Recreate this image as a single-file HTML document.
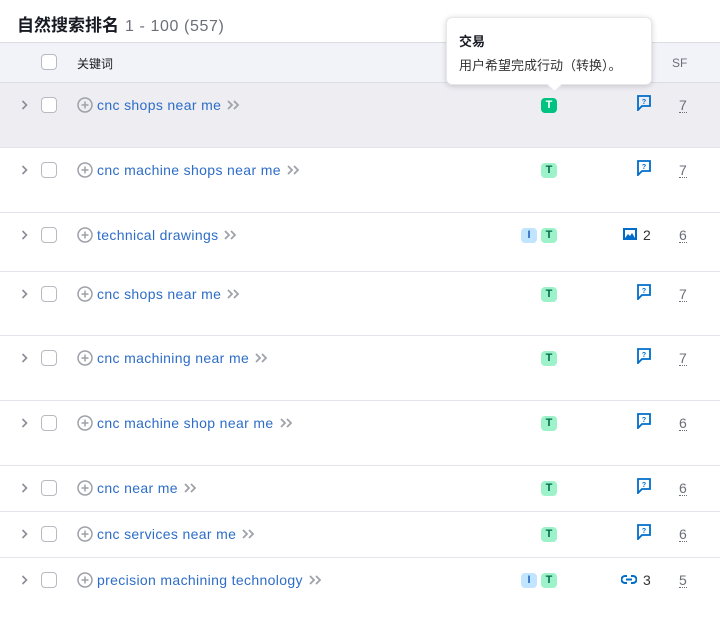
<!DOCTYPE html>
<html><head><meta charset="utf-8"><style>
*{margin:0;padding:0;box-sizing:border-box}
body{width:720px;height:617px;overflow:hidden;background:#fff;font-family:"Liberation Sans","Noto Sans CJK SC",sans-serif;position:relative;color:#333}
.title{position:absolute;left:17px;top:11px;font-size:17px;font-weight:bold;color:#171a22}
.title span{font-weight:normal;color:#6c6e79;font-size:16px;margin-left:6px;letter-spacing:0.6px}
.hdr{position:absolute;left:0;top:42px;width:720px;height:41px;background:#f2f3f8;border-top:1px solid #dcdde3;border-bottom:1px solid #dcdde3}
.row{position:absolute;left:0;width:720px;border-bottom:1px solid #e3e4e9}
.cb{position:absolute;left:41px;width:16px;height:16px;border:1px solid #b8bac2;border-radius:4px;background:#fff}
.chev{position:absolute;left:21px}
.kw{position:absolute;left:77px;font-size:14px;letter-spacing:0.35px;color:#2d6dc7;white-space:nowrap;display:flex;align-items:center}
.kw svg{margin-right:4px}
.kw svg.ar{margin-left:5px;margin-right:0}
.tag{position:absolute;width:16px;height:15px;border-radius:4px;font-size:11px;font-weight:bold;text-align:center;line-height:15px}
.T{background:#9ef2c9;color:#006a49}
.I{background:#c2e5ff;color:#1f63c1}
.sf{position:absolute;left:679px;font-size:14px;color:#6c6e79;border-bottom:1px dotted #6c6e79;line-height:14px}
.ic{position:absolute}
.num{position:absolute;font-size:14px;color:#333}
.tip{position:absolute;left:446px;top:17px;width:206px;height:68px;background:#fff;border-radius:6px;box-shadow:0 1px 6px rgba(0,0,0,.18);border:1px solid #e6e7ea}
.tip b{position:absolute;left:12px;top:13px;font-size:13px;color:#171a22}
.tip p{position:absolute;left:12px;top:37px;font-size:13px;color:#333;white-space:nowrap}
.tip:after{content:"";position:absolute;left:102px;bottom:-6px;width:10px;height:10px;background:#fff;transform:rotate(45deg);border-right:1px solid #e6e7ea;border-bottom:1px solid #e6e7ea}
</style></head><body>
<div class="title">自然搜索排名<span>1 - 100 (557)</span></div>
<div class="hdr">
<div class="cb" style="top:11px"></div>
<div style="position:absolute;left:77px;top:12px;font-size:12px;color:#171a22">关键词</div>
<div style="position:absolute;left:672px;top:13px;font-size:12px;color:#6c6e79">SF</div>
</div>
<div class="row" style="top:83px;height:65px;background:#ededf2"></div>
<div class="row" style="top:148px;height:65px"></div>
<div class="row" style="top:213px;height:59px"></div>
<div class="row" style="top:272px;height:64px"></div>
<div class="row" style="top:336px;height:65px"></div>
<div class="row" style="top:401px;height:65px"></div>
<div class="row" style="top:466px;height:46px"></div>
<div class="row" style="top:512px;height:46px"></div>
<div id="rows"></div>
<script>
var d=[[105,"cnc shops near me",0,"q",0,"7"],[170,"cnc machine shops near me",0,"q",0,"7"],[235,"technical drawings",1,"img","2","6"],[294,"cnc shops near me",0,"q",0,"7"],[358,"cnc machining near me",0,"q",0,"7"],[423,"cnc machine shop near me",0,"q",0,"6"],[488,"cnc near me",0,"q",0,"6"],[534,"cnc services near me",0,"q",0,"6"],[580,"precision machining technology",1,"link","3","5"]];
var h="";
d.forEach(function(r){var y=r[0];
h+='<svg class="chev" style="top:'+(y-5)+'px" width="7" height="10" viewBox="0 0 7 10"><path d="M1.5 1l4 4-4 4" fill="none" stroke="#8b8d96" stroke-width="1.6"/></svg>';
h+='<div class="cb" style="top:'+(y-8)+'px"></div>';
h+='<div class="kw" style="top:'+(y-8)+'px"><svg width="16" height="16" viewBox="0 0 16 16"><circle cx="8" cy="8" r="7" fill="none" stroke="#9fa1a9" stroke-width="1.5"/><path d="M8 4.5v7M4.5 8h7" stroke="#9fa1a9" stroke-width="1.5"/></svg>'+r[1]+'<svg class="ar" width="14" height="12" viewBox="0 0 14 12"><path d="M2 2l4 4-4 4M8 2l4 4-4 4" fill="none" stroke="#a0a2aa" stroke-width="1.8"/></svg></div>';
if(r[2])h+='<div class="tag I" style="left:521px;top:'+(y-7)+'px">I</div>';
h+='<div class="tag T" style="left:541px;top:'+(y-7)+'px'+(y==105?';background:#00c281;color:#fff':'')+'">T</div>';
if(r[3]=="q")h+='<svg class="ic" style="left:637px;top:'+(y-10)+'px" width="14" height="16" viewBox="0 0 14 16"><path d="M1 1h12v10H5l-4 4z" fill="none" stroke="#006dca" stroke-width="1.8"/><text x="7" y="9" font-size="7" font-weight="bold" text-anchor="middle" fill="#006dca" font-family="Liberation Sans">?</text></svg>';
if(r[3]=="img")h+='<svg class="ic" style="left:623px;top:'+(y-7)+'px" width="14" height="12" viewBox="0 0 14 12"><rect x="0" y="0" width="14" height="12" fill="#006dca"/><rect x="2" y="2" width="10" height="8" fill="#fff"/><path d="M2 10l3-4 2 2 2-3 3 5z" fill="#006dca"/></svg>';
if(r[3]=="link")h+='<svg class="ic" style="left:621px;top:'+(y-6)+'px" width="16" height="11" viewBox="0 0 16 11"><path d="M6 2H4a3.5 3.5 0 000 7h2M10 2h2a3.5 3.5 0 010 7h-2M5 5.5h6" fill="none" stroke="#006dca" stroke-width="2"/></svg>';
if(r[4])h+='<div class="num" style="left:643px;top:'+(y-8)+'px">'+r[4]+'</div>';
h+='<div class="sf" style="top:'+(y-7)+'px">'+r[5]+'</div>';
});
document.getElementById("rows").innerHTML=h;
</script>
<div class="tip"><b>交易</b><p>用户希望完成行动（转换）。</p></div>
</body></html>
